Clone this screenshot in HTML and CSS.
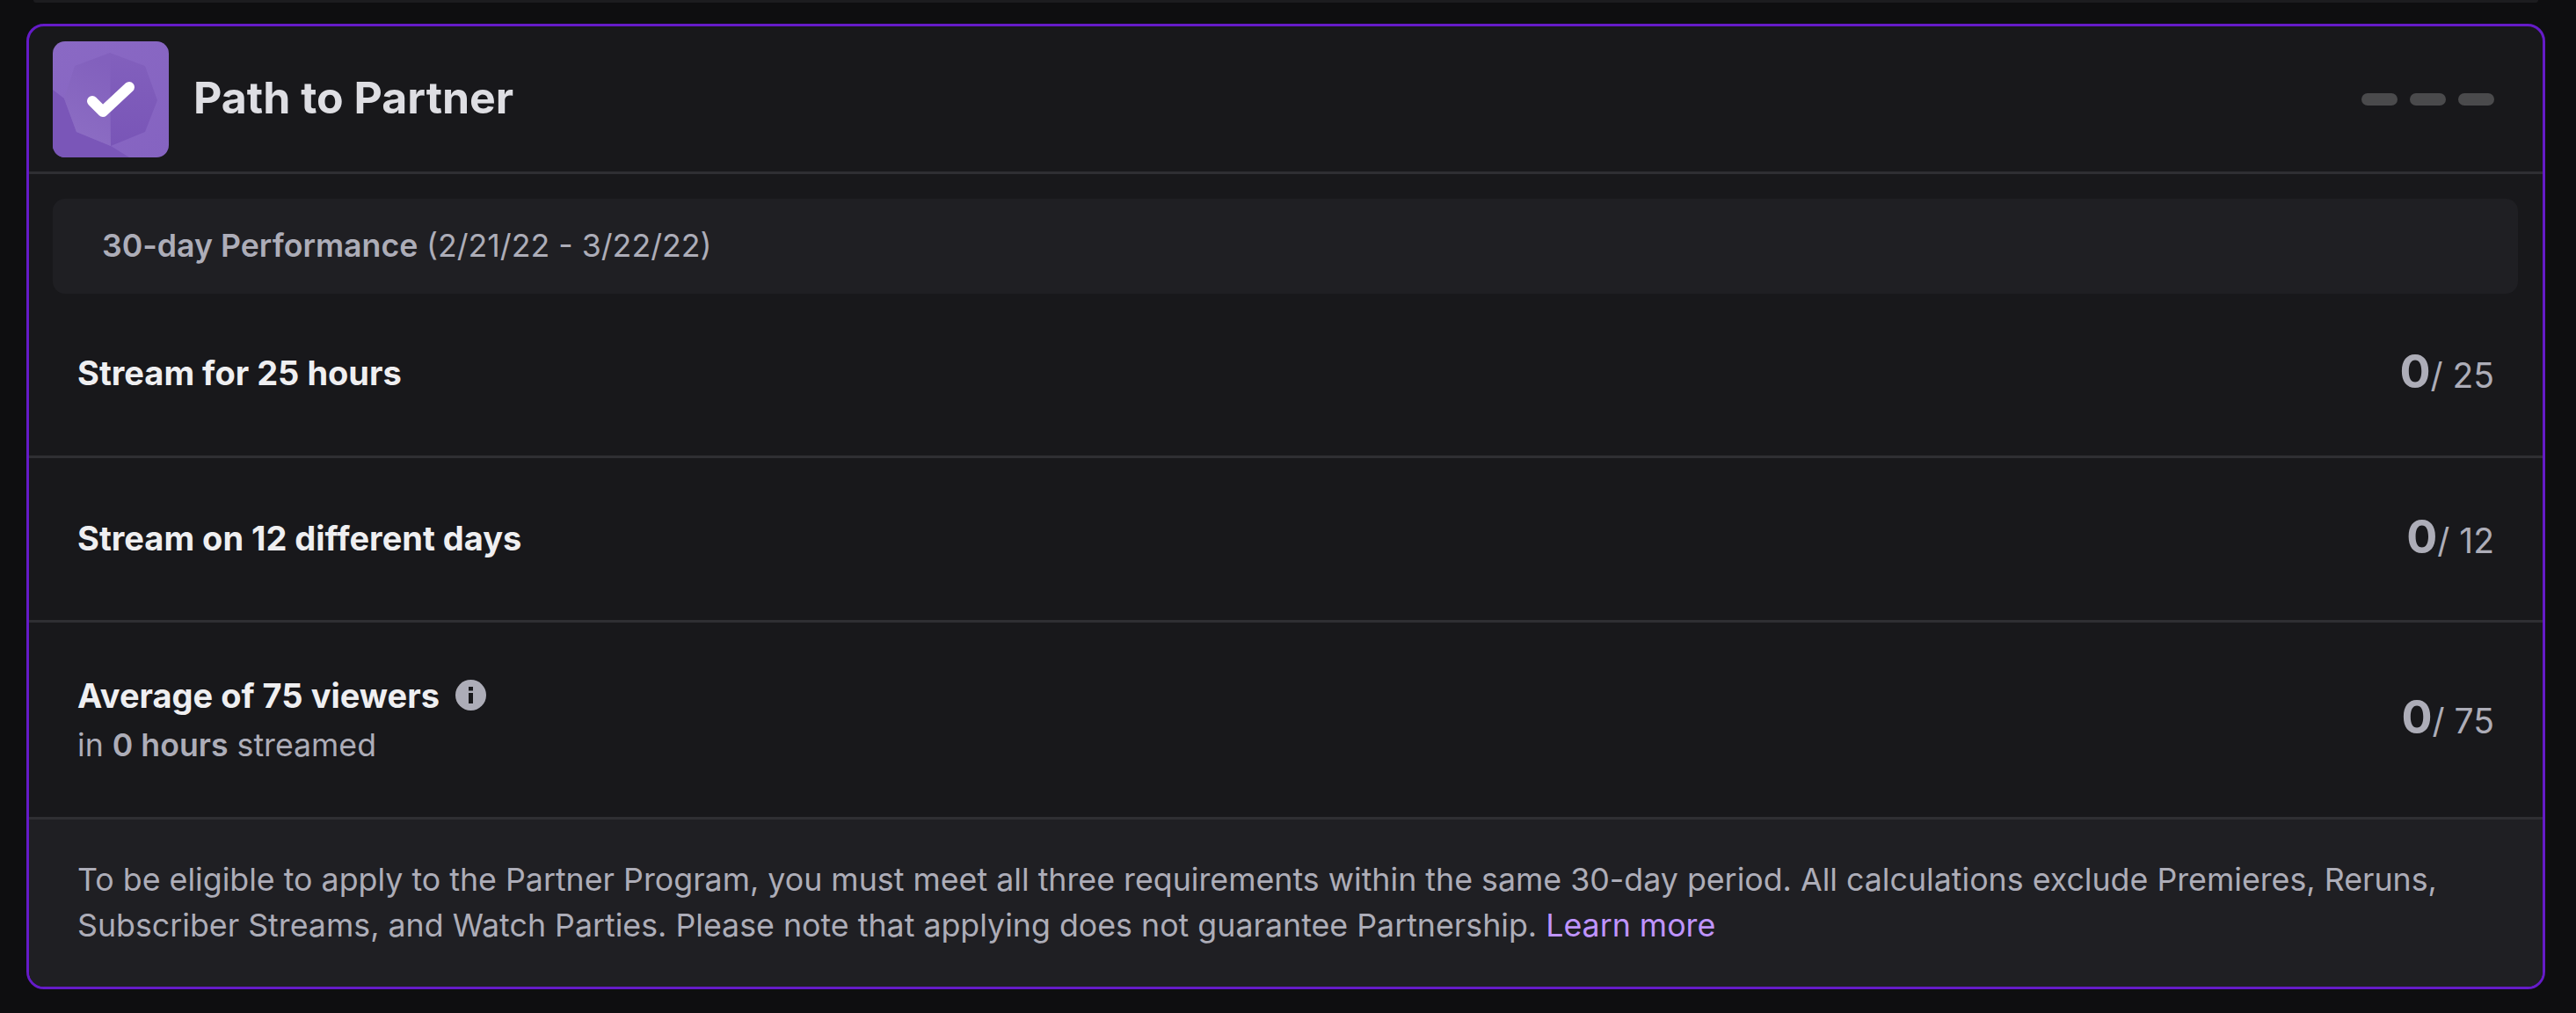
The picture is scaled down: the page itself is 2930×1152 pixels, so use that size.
FILE: index.html
```html
<!DOCTYPE html>
<html lang="en">

<head>
    <meta charset="UTF-8">
    <meta name="viewport" content="width=device-width, initial-scale=1.0">
    <title>Path to Partner</title>
    <link rel="stylesheet" href="styles.css">
</head>

<body>
    <div class="prev-card"></div>
    <div class="card">
        <div class="card-head">
            <svg class="badge" viewBox="0 0 132 132">
                <defs>
                    <linearGradient id="badge-bg" x1="0" y1="0" x2="1" y2="1">
                        <stop offset="0" stop-color="#8a69c4"/>
                        <stop offset="1" stop-color="#8563c1"/>
                    </linearGradient>
                    <linearGradient id="badge-left" x1="0.5" y1="0" x2="0.2" y2="1">
                        <stop offset="0" stop-color="#8260bd"/>
                        <stop offset="1" stop-color="#8d6ec4"/>
                    </linearGradient>
                    <linearGradient id="badge-right" x1="0.5" y1="0" x2="0.5" y2="1">
                        <stop offset="0" stop-color="#8260bd"/>
                        <stop offset="1" stop-color="#7955b7"/>
                    </linearGradient>
                </defs>
                <rect width="132" height="132" fill="url(#badge-bg)"/>
                <polygon points="0,55 13,65 27,103 66,119 87,132 0,132" fill="#7a56b8"/>
                <polygon points="65,13 66,119 27,103 13,65 25,28" fill="url(#badge-left)"/>
                <polygon points="65,13 105,28 119,67 105,103 66,119" fill="url(#badge-right)"/>
                <polyline points="45,68 57,80 87,52" fill="none" stroke="#fff" stroke-width="12" stroke-linecap="round" stroke-linejoin="round"/>
            </svg>
            <h2 class="card-title">Path to Partner</h2>
            <div class="dashes">
                <span></span>
                <span></span>
                <span></span>
            </div>
        </div>
        <div class="period">
            <b>30-day Performance</b> (2/21/22 - 3/22/22)
        </div>
        <div class="row row-first">
            <div class="row-name">Stream for 25 hours</div>
            <div class="count"><b>0</b>/ 25</div>
        </div>
        <div class="row">
            <div class="row-name">Stream on 12 different days</div>
            <div class="count"><b>0</b>/ 12</div>
        </div>
        <div class="row row-tall">
            <div>
                <div class="row-name">Average of 75 viewers
                    <svg class="info" viewBox="0 0 35 35">
                        <circle cx="17.5" cy="17.5" r="17.5" fill="#adadb8"/>
                        <rect x="15" y="15" width="5" height="12" fill="#18181b"/>
                        <rect x="15" y="8" width="5" height="4.5" fill="#18181b"/>
                    </svg>
                </div>
                <div class="row-sub">in <b>0 hours</b> streamed</div>
            </div>
            <div class="count"><b>0</b>/ 75</div>
        </div>
        <div class="note">
            To be eligible to apply to the Partner Program, you must meet all three requirements within the same 30-day period. All calculations exclude Premieres, Reruns,
            Subscriber Streams, and Watch Parties. Please note that applying does not guarantee Partnership. <a href="#">Learn more</a>
        </div>
    </div>
</body>

</html>
```

FILE: styles.css
```css
* {
    margin: 0;
    padding: 0;
    box-sizing: border-box;
}

html,
body {
    height: 100%;
}

body {
    background-color: #0e0e10;
    font-family: Inter, "Liberation Sans", sans-serif;
    overflow: hidden;
    padding: 0 35px 0 30px;
}

.prev-card {
    height: 3px;
    margin: 0 8px 24px;
    background-color: #1c1c1f;
    border-radius: 0 0 12px 12px;
}

.card {
    height: 1098px;
    border: 3px solid #651bc8;
    border-radius: 20px;
    background-color: #18181b;
    overflow: hidden;
}

.card-head {
    display: flex;
    align-items: center;
    height: 168px;
    padding: 0 55px 3px 27px;
    border-bottom: 3px solid #2f2f33;
}

.badge {
    width: 132px;
    height: 132px;
    flex-shrink: 0;
    border-radius: 14px;
    margin-top: 3px;
}

.card-title {
    margin-left: 28px;
    font-size: 50px;
    font-weight: 700;
    color: #dedee3;
}

.dashes {
    display: flex;
    gap: 14px;
    margin-left: auto;
    margin-top: 3px;
}

.dashes span {
    width: 41px;
    height: 14px;
    border-radius: 7px;
    background-color: #4a4a4c;
}

.period {
    display: flex;
    align-items: center;
    gap: 0.27em;
    height: 108px;
    margin: 28px 28px 0 27px;
    padding-left: 56px;
    padding-bottom: 2px;
    border-radius: 14px;
    background-color: #1f1f23;
    font-size: 35.7px;
    color: #adadb8;
}

.period b {
    font-weight: 600;
}

.row {
    display: flex;
    align-items: center;
    justify-content: space-between;
    height: 187px;
    padding: 0 55px 2px;
    border-bottom: 3px solid #2f2f33;
}

.row-first {
    padding-bottom: 4px;
}

.row-tall {
    height: 224px;
    padding-bottom: 0;
}

.row-tall .count {
    margin-bottom: 7px;
}

.row-name {
    display: flex;
    align-items: center;
    gap: 18px;
    font-size: 38px;
    font-weight: 700;
    line-height: 50px;
    color: #efeff1;
}

.info {
    width: 35px;
    height: 35px;
}

.row-sub {
    margin-top: 6px;
    font-size: 35.7px;
    line-height: 50px;
    color: #adadb8;
}

.row-sub b {
    font-weight: 600;
}

.count {
    margin-bottom: 3px;
    font-size: 39px;
    color: #adadb8;
}

.count b {
    font-size: 52px;
}

.note {
    height: 190px;
    padding: 42px 55px;
    background-color: #1f1f23;
    font-size: 35.75px;
    line-height: 52px;
    color: #adadb8;
}

.note a {
    color: #bf94ff;
    text-decoration: none;
}
```
